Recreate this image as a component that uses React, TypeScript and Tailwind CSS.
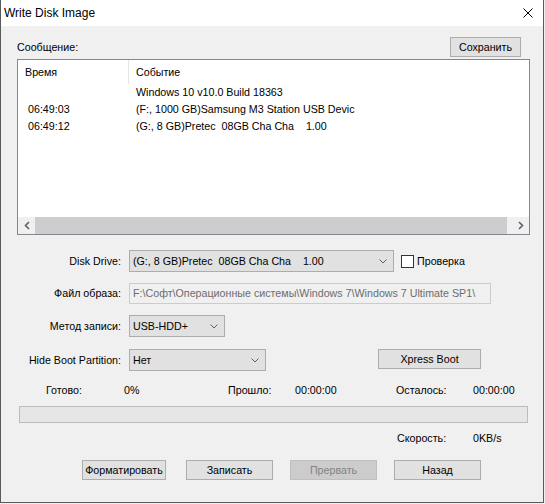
import React from "react";

function Chevron() {
  return (
    <svg width="8" height="5" viewBox="0 0 8 5" className="shrink-0">
      <path d="M0.5 0.5 L4 4 L7.5 0.5" stroke="#606060" strokeWidth="1" fill="none" />
    </svg>
  );
}

function Combo({ w, text }: { w: string; text: string }) {
  return (
    <div className={`${w} h-[22px] border border-[#adadad] bg-[#e1e1e1] flex items-center justify-between pl-[3px] pr-[6px]`}>
      <span className="whitespace-pre">{text}</span>
      <Chevron />
    </div>
  );
}

function Btn({ w, children, disabled }: { w: string; children: React.ReactNode; disabled?: boolean }) {
  return (
    <div
      className={`${w} h-[20px] border flex items-center justify-center whitespace-nowrap ${
        disabled ? "border-[#bfbfbf] bg-[#cccccc] text-[#838383]" : "border-[#adadad] bg-[#e1e1e1] text-black"
      }`}
    >
      {children}
    </div>
  );
}

function Label({ children }: { children: React.ReactNode }) {
  return <div className="w-[104px] text-right shrink-0 mr-[8px]">{children}</div>;
}

export default function App() {
  return (
    <div className="w-[545px] h-[504px] bg-[#f0f0f0] font-['Liberation_Sans',Arial,sans-serif] text-[10.7px] leading-[13px] text-black">
      <div className="w-[544px] h-[503px] border-x border-b border-[#5a5a5a] bg-[#f0f0f0] flex flex-col">
        {/* Title bar */}
        <div className="h-[26px] bg-white flex items-center justify-between pl-[3px] pr-[10px] shrink-0">
          <span className="text-[12px]">Write Disk Image</span>
          <svg width="10" height="10" viewBox="0 0 10 10">
            <path d="M0.5 0.5 L9.5 9.5 M9.5 0.5 L0.5 9.5" stroke="#000" strokeWidth="1" />
          </svg>
        </div>

        <div className="pl-[16px] pr-[13px]">
          {/* Message header row */}
          <div className="mt-[11px] h-[20px] flex justify-between items-end">
            <span className="mb-[3px]">Сообщение:</span>
            <div className="mr-[9px]">
              <Btn w="w-[71px]">Сохранить</Btn>
            </div>
          </div>

          {/* List box */}
          <div className="mt-[2px] h-[176px] border border-[#828790] bg-white flex flex-col">
            <div className="h-[24px] flex shrink-0">
              <div className="w-[110px] pl-[7px] flex items-center">Время</div>
              <div className="w-px h-full bg-[#e5e5e5]" />
              <div className="pl-[7px] flex items-center">Событие</div>
            </div>
            <div className="h-[17px] flex items-center">
              <div className="w-[111px] pl-[10px]"></div>
              <div className="pl-[7px] whitespace-pre">Windows 10 v10.0 Build 18363</div>
            </div>
            <div className="h-[17px] flex items-center">
              <div className="w-[111px] pl-[10px]">06:49:03</div>
              <div className="pl-[7px] whitespace-pre">(F:, 1000 GB)Samsung M3 Station USB Devic</div>
            </div>
            <div className="h-[17px] flex items-center">
              <div className="w-[111px] pl-[10px]">06:49:12</div>
              <div className="pl-[7px] whitespace-pre">(G:, 8 GB)Pretec  08GB Cha Cha    1.00</div>
            </div>
            <div className="flex-1" />
            <div className="h-[17px] flex bg-[#f0f0f0] shrink-0">
              <div className="w-[17px] h-full flex items-center justify-center">
                <svg width="6" height="9" viewBox="0 0 6 9">
                  <path d="M5 1 L1.5 4.5 L5 8" stroke="#606060" strokeWidth="1.6" fill="none" />
                </svg>
              </div>
              <div className="w-[472px] h-full bg-[#cdcdcd]" />
              <div className="flex-1" />
              <div className="w-[17px] h-full flex items-center justify-center">
                <svg width="6" height="9" viewBox="0 0 6 9">
                  <path d="M1 1 L4.5 4.5 L1 8" stroke="#606060" strokeWidth="1.6" fill="none" />
                </svg>
              </div>
            </div>
          </div>

          {/* Disk drive */}
          <div className="mt-[15px] flex items-center">
            <Label>Disk Drive:</Label>
            <Combo w="w-[265px]" text="(G:, 8 GB)Pretec  08GB Cha Cha    1.00" />
            <div className="ml-[7px] w-[13px] h-[13px] border border-[#333333] bg-white" />
            <span className="ml-[3px]">Проверка</span>
          </div>

          {/* Image file */}
          <div className="mt-[11px] flex items-center">
            <Label>Файл образа:</Label>
            <div className="w-[362px] h-[21px] border border-[#cccccc] bg-[#f0f0f0] flex items-center pl-[3px] overflow-hidden">
              <span className="whitespace-nowrap text-[#6d6d6d]">
                F:\Софт\Операционные системы\Windows 7\Windows 7 Ultimate SP1\
              </span>
            </div>
          </div>

          {/* Method */}
          <div className="mt-[11px] flex items-center">
            <Label>Метод записи:</Label>
            <Combo w="w-[96px]" text="USB-HDD+" />
          </div>

          {/* Hide boot */}
          <div className="mt-[12px] flex items-center">
            <Label>Hide Boot Partition:</Label>
            <Combo w="w-[137px]" text="Нет" />
            <div className="ml-[112px] self-start">
              <Btn w="w-[103px]">Xpress Boot</Btn>
            </div>
          </div>

          {/* Stats */}
          <div className="mt-[13px] h-[13px] flex ml-[29px]">
            <span className="w-[78px]">Готово:</span>
            <span className="w-[104px]">0%</span>
            <span className="w-[67px]">Прошло:</span>
            <span className="w-[101px]">00:00:00</span>
            <span className="w-[77px]">Осталось:</span>
            <span>00:00:00</span>
          </div>

          {/* Progress */}
          <div className="mt-[9px] ml-[2px] w-[509px] h-[17px] border border-[#bcbcbc] bg-[#e6e6e6]" />

          {/* Speed */}
          <div className="mt-[9px] h-[13px] flex ml-[380px]">
            <span className="w-[76px]">Скорость:</span>
            <span>0KB/s</span>
          </div>

          {/* Buttons */}
          <div className="mt-[15px] flex ml-[65px]">
            <Btn w="w-[84px]">Форматировать</Btn>
            <div className="ml-[20px]">
              <Btn w="w-[87px]">Записать</Btn>
            </div>
            <div className="ml-[17px]">
              <Btn w="w-[87px]" disabled>
                Прервать
              </Btn>
            </div>
            <div className="ml-[17px]">
              <Btn w="w-[87px]">Назад</Btn>
            </div>
          </div>
        </div>
      </div>
    </div>
  );
}
